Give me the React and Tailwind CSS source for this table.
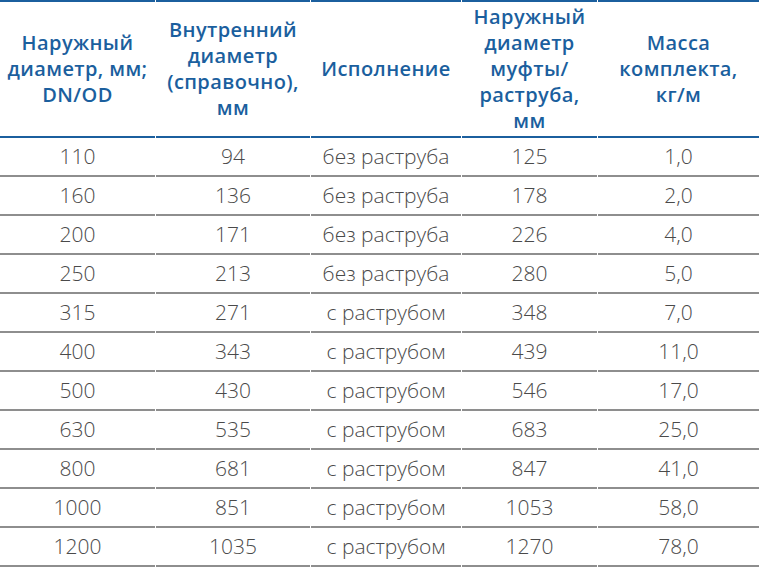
import React from 'react';

const rows = [
  ['110', '94', 'без раструба', '125', '1,0'],
  ['160', '136', 'без раструба', '178', '2,0'],
  ['200', '171', 'без раструба', '226', '4,0'],
  ['250', '213', 'без раструба', '280', '5,0'],
  ['315', '271', 'с раструбом', '348', '7,0'],
  ['400', '343', 'с раструбом', '439', '11,0'],
  ['500', '430', 'с раструбом', '546', '17,0'],
  ['630', '535', 'с раструбом', '683', '25,0'],
  ['800', '681', 'с раструбом', '847', '41,0'],
  ['1000', '851', 'с раструбом', '1053', '58,0'],
  ['1200', '1035', 'с раструбом', '1270', '78,0'],
];

const headers = [
  ['Наружный', 'диаметр, мм;', 'DN/OD'],
  ['Внутренний', 'диаметр', '(справочно),', 'мм'],
  ['Исполнение'],
  ['Наружный', 'диаметр', 'муфты/', 'раструба,', 'мм'],
  ['Масса', 'комплекта,', 'кг/м'],
];

export default function App() {
  return (
    <div className="w-[759px] h-[567px] bg-white overflow-hidden" style={{ fontFamily: '"Open Sans", "Noto Sans", sans-serif' }}>
      <div className="grid grid-cols-[155px_154px_150px_135px_1fr] gap-x-px">
        {headers.map((lines, i) => (
          <div
            key={i}
            className="h-[138px] border-t-2 border-b-2 border-[#1b5f9e] flex flex-col items-center justify-center text-center text-[20px] leading-[26px] font-semibold tracking-[0.4px] text-[#1b5f9e]"
          >
            {lines.map((l, j) => (
              <span key={j}>{l}</span>
            ))}
          </div>
        ))}
        {rows.map((row, r) =>
          row.map((cell, c) => (
            <div
              key={r + '-' + c}
              className="h-[39px] border-b-2 border-[#8e8e8e] flex items-center justify-center text-[21px] font-light text-[#4a4a4a]"
            >
              {cell}
            </div>
          ))
        )}
      </div>
    </div>
  );
}
